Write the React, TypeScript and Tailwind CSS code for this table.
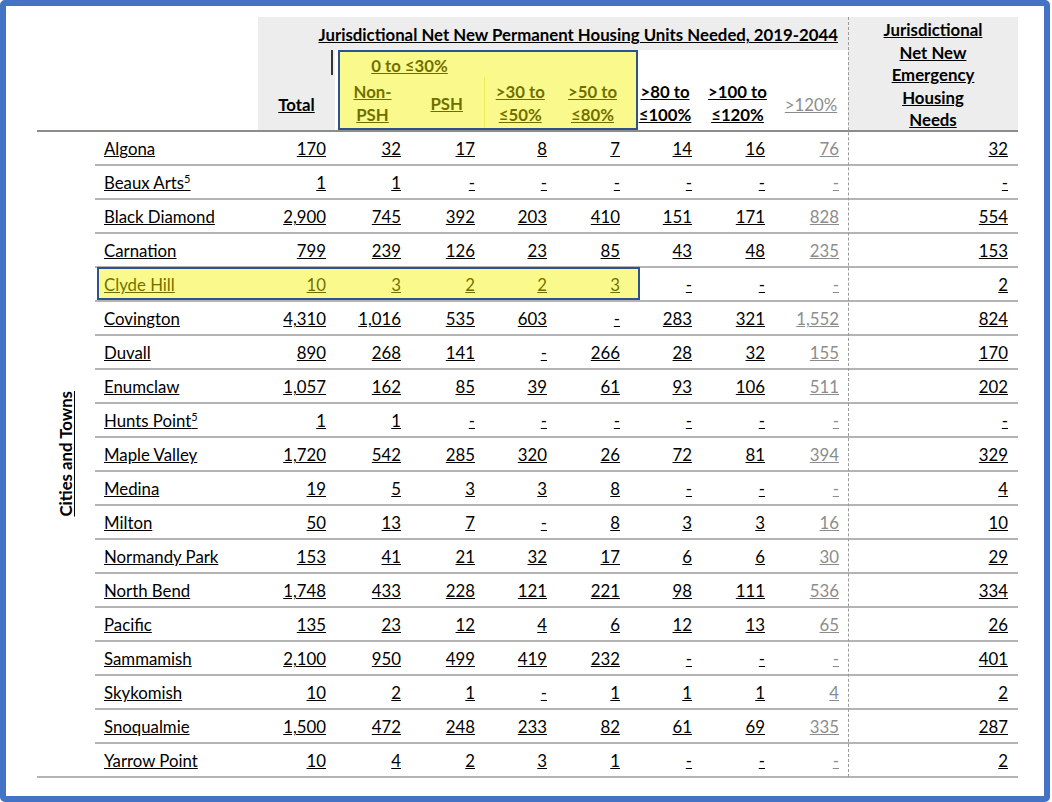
import React from 'react';

type Row = {
  name: string;
  sup?: string;
  vals: string[];
  emergency: string;
};

const rows: Row[] = [
  { name: 'Algona', vals: ['170', '32', '17', '8', '7', '14', '16', '76'], emergency: '32' },
  { name: 'Beaux Arts', sup: '5', vals: ['1', '1', '-', '-', '-', '-', '-', '-'], emergency: '-' },
  { name: 'Black Diamond', vals: ['2,900', '745', '392', '203', '410', '151', '171', '828'], emergency: '554' },
  { name: 'Carnation', vals: ['799', '239', '126', '23', '85', '43', '48', '235'], emergency: '153' },
  { name: 'Clyde Hill', vals: ['10', '3', '2', '2', '3', '-', '-', '-'], emergency: '2' },
  { name: 'Covington', vals: ['4,310', '1,016', '535', '603', '-', '283', '321', '1,552'], emergency: '824' },
  { name: 'Duvall', vals: ['890', '268', '141', '-', '266', '28', '32', '155'], emergency: '170' },
  { name: 'Enumclaw', vals: ['1,057', '162', '85', '39', '61', '93', '106', '511'], emergency: '202' },
  { name: 'Hunts Point', sup: '5', vals: ['1', '1', '-', '-', '-', '-', '-', '-'], emergency: '-' },
  { name: 'Maple Valley', vals: ['1,720', '542', '285', '320', '26', '72', '81', '394'], emergency: '329' },
  { name: 'Medina', vals: ['19', '5', '3', '3', '8', '-', '-', '-'], emergency: '4' },
  { name: 'Milton', vals: ['50', '13', '7', '-', '8', '3', '3', '16'], emergency: '10' },
  { name: 'Normandy Park', vals: ['153', '41', '21', '32', '17', '6', '6', '30'], emergency: '29' },
  { name: 'North Bend', vals: ['1,748', '433', '228', '121', '221', '98', '111', '536'], emergency: '334' },
  { name: 'Pacific', vals: ['135', '23', '12', '4', '6', '12', '13', '65'], emergency: '26' },
  { name: 'Sammamish', vals: ['2,100', '950', '499', '419', '232', '-', '-', '-'], emergency: '401' },
  { name: 'Skykomish', vals: ['10', '2', '1', '-', '1', '1', '1', '4'], emergency: '2' },
  { name: 'Snoqualmie', vals: ['1,500', '472', '248', '233', '82', '61', '69', '335'], emergency: '287' },
  { name: 'Yarrow Point', vals: ['10', '4', '2', '3', '1', '-', '-', '-'], emergency: '2' },
];

const colWidths = [58, 163, 77, 75, 74, 72, 73, 72, 73, 74, 170];

const rowLine = 'border-b-2 border-[#b4b4b4]';
const headLine = 'border-b-2 border-[#8c8c8c]';

const App: React.FC = () => {
  return (
    <div className="w-[1050px] h-[802px] bg-white border-[6px] border-[#4472c4] rounded-[5px] pl-[31px] pt-[11px] font-['Lato',sans-serif] text-[16.8px] text-black">
      <div className="relative w-[981px]">
        <table className="table-fixed border-collapse w-[981px]">
          <colgroup>
            {colWidths.map((w, i) => (
              <col key={i} style={{ width: w }} />
            ))}
          </colgroup>
          <thead>
            <tr className="h-[33px]">
              <th colSpan={2} rowSpan={3} className={headLine}></th>
              <th colSpan={8} className="bg-[#ededed] text-right pr-[10px] pt-[3px] font-bold whitespace-nowrap">
                <span className="underline">Jurisdictional Net New Permanent Housing Units Needed, 2019-2044</span>
              </th>
              <th rowSpan={3} className={`bg-[#ededed] ${headLine} font-bold leading-[22.5px] align-middle`}>
                <div className="translate-y-[2px]">
                  <div className="underline">Jurisdictional</div>
                  <div className="underline">Net New</div>
                  <div className="underline">Emergency</div>
                  <div className="underline">Housing</div>
                  <div className="underline">Needs</div>
                </div>
              </th>
            </tr>
            <tr className="h-[27px]">
              <th className="bg-[#ededed]"></th>
              <th colSpan={2} className="font-bold">
                <span className="underline relative top-[2px]">0 to ≤30%</span>
              </th>
              <th></th>
              <th></th>
              <th></th>
              <th></th>
              <th></th>
            </tr>
            <tr className="h-[53px] leading-[23px]">
              <th className={`bg-[#ededed] ${headLine} font-bold pt-[2px]`}>
                <span className="underline">Total</span>
              </th>
              <th className={`font-bold ${headLine}`}>
                <span className="underline">Non-</span>
                <br />
                <span className="underline">PSH</span>
              </th>
              <th className={`font-bold ${headLine}`}>
                <span className="underline">PSH</span>
              </th>
              <th className={`font-bold ${headLine} border-l border-l-[#e6e6a0]`}>
                <span className="underline">&gt;30 to</span>
                <br />
                <span className="underline">≤50%</span>
              </th>
              <th className={`font-bold ${headLine}`}>
                <span className="underline">&gt;50 to</span>
                <br />
                <span className="underline">≤80%</span>
              </th>
              <th className={`font-bold ${headLine}`}>
                <span className="underline">&gt;80 to</span>
                <br />
                <span className="underline">≤100%</span>
              </th>
              <th className={`font-bold ${headLine}`}>
                <span className="underline">&gt;100 to</span>
                <br />
                <span className="underline">≤120%</span>
              </th>
              <th className={`font-normal text-[#8c8c8c] ${headLine} pt-[2px]`}>
                <span className="underline">&gt;120%</span>
              </th>
            </tr>
          </thead>
          <tbody>
            {rows.map((r, i) => (
              <tr key={r.name} className="h-[34px]">
                {i === 0 && (
                  <td rowSpan={rows.length} className={`${rowLine} align-middle`}>
                    <div className="flex justify-center">
                      <span className="[writing-mode:vertical-rl] rotate-180 font-bold underline whitespace-nowrap">
                        Cities and Towns
                      </span>
                    </div>
                  </td>
                )}
                <td className={`${rowLine} pl-[9px] pt-[3px] whitespace-nowrap`}>
                  <span className="underline">
                    {r.name}
                    {r.sup && <sup className="text-[11px] -top-[6px]">{r.sup}</sup>}
                  </span>
                </td>
                {r.vals.map((v, j) => (
                  <td
                    key={j}
                    className={`${rowLine} text-right pr-[9px] pt-[3px] ${j === 7 ? 'text-[#8c8c8c]' : ''}`}
                  >
                    <span className="underline">{v}</span>
                  </td>
                ))}
                <td className={`${rowLine} text-right pr-[10px] pt-[3px]`}>
                  <span className="underline">{r.emergency}</span>
                </td>
              </tr>
            ))}
          </tbody>
        </table>

        {/* dashed divider before the emergency column */}
        <div className="absolute left-[811px] top-0 bottom-[1px] border-l border-dashed border-[#9a9a9a]"></div>
        {/* header highlight */}
        <div className="absolute left-[301px] top-[33px] w-[300px] h-[80px] bg-[rgba(245,245,0,0.45)] border-2 border-[#2f528f]"></div>
        <div className="absolute left-[294px] top-[33px] w-[2px] h-[25px] bg-[#333]"></div>
        {/* Clyde Hill highlight */}
        <div className="absolute left-[60px] top-[250px] w-[543px] h-[33px] bg-[rgba(245,245,0,0.45)] border-2 border-[#2f528f]"></div>
      </div>
    </div>
  );
};

export default App;
